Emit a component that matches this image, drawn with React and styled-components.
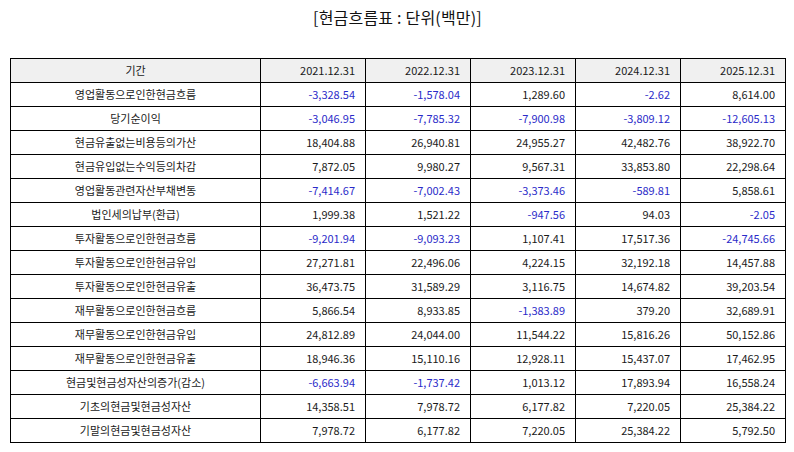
import React from "react";
import styled, { createGlobalStyle, css } from "styled-components";

const Global = createGlobalStyle`
  html, body { margin: 0; padding: 0; background: #fff; }
  body { font-family: "Noto Sans CJK KR", "Noto Sans", sans-serif; color: #111; }
`;

const Page = styled.div`
  width: 794px;
  height: 452px;
  box-sizing: border-box;
  padding: 5px 9px 0 10px;
  display: flex;
  flex-direction: column;
  align-items: stretch;
`;

const Title = styled.h1`
  margin: 0;
  height: 25px;
  font-size: 16px;
  font-weight: 400;
  line-height: 25px;
  text-align: center;
  color: #111;
  letter-spacing: 0.2px;
`;

const Table = styled.table`
  margin-top: 28px;
  width: 775px;
  border-collapse: collapse;
  table-layout: fixed;
  font-size: 11px;
`;

const Col = styled.col`
  width: ${(p) => (p.$wide ? "250px" : "105px")};
`;

const cellBase = css`
  border: 1px solid #000;
  height: 24px;
  padding: 0 10px;
  box-sizing: border-box;
  white-space: nowrap;
  line-height: 1;
  font-weight: 400;
  text-align: ${(p) => (p.$label ? "center" : "right")};
`;

const HeadCell = styled.th`
  ${cellBase}
  background: #f0f0f0;
  color: #1a1a1a;
`;

const Cell = styled.td`
  ${cellBase}
  background: #fff;
  color: ${(p) => (p.$neg ? "#2b2bc9" : "#1a1a1a")};
`;

const headers = ["2021.12.31", "2022.12.31", "2023.12.31", "2024.12.31", "2025.12.31"];

const rows = [
  ["영업활동으로인한현금흐름", "-3,328.54", "-1,578.04", "1,289.60", "-2.62", "8,614.00"],
  ["당기순이익", "-3,046.95", "-7,785.32", "-7,900.98", "-3,809.12", "-12,605.13"],
  ["현금유출없는비용등의가산", "18,404.88", "26,940.81", "24,955.27", "42,482.76", "38,922.70"],
  ["현금유입없는수익등의차감", "7,872.05", "9,980.27", "9,567.31", "33,853.80", "22,298.64"],
  ["영업활동관련자산부채변동", "-7,414.67", "-7,002.43", "-3,373.46", "-589.81", "5,858.61"],
  ["법인세의납부(환급)", "1,999.38", "1,521.22", "-947.56", "94.03", "-2.05"],
  ["투자활동으로인한현금흐름", "-9,201.94", "-9,093.23", "1,107.41", "17,517.36", "-24,745.66"],
  ["투자활동으로인한현금유입", "27,271.81", "22,496.06", "4,224.15", "32,192.18", "14,457.88"],
  ["투자활동으로인한현금유출", "36,473.75", "31,589.29", "3,116.75", "14,674.82", "39,203.54"],
  ["재무활동으로인한현금흐름", "5,866.54", "8,933.85", "-1,383.89", "379.20", "32,689.91"],
  ["재무활동으로인한현금유입", "24,812.89", "24,044.00", "11,544.22", "15,816.26", "50,152.86"],
  ["재무활동으로인한현금유출", "18,946.36", "15,110.16", "12,928.11", "15,437.07", "17,462.95"],
  ["현금및현금성자산의증가(감소)", "-6,663.94", "-1,737.42", "1,013.12", "17,893.94", "16,558.24"],
  ["기초의현금및현금성자산", "14,358.51", "7,978.72", "6,177.82", "7,220.05", "25,384.22"],
  ["기말의현금및현금성자산", "7,978.72", "6,177.82", "7,220.05", "25,384.22", "5,792.50"],
];

export default function App() {
  return (
    <>
      <Global />
      <Page>
        <Title>[현금흐름표 : 단위(백만)]</Title>
        <Table>
          <colgroup>
            <Col $wide />
            {headers.map((h) => (
              <Col key={h} />
            ))}
          </colgroup>
          <thead>
            <tr>
              <HeadCell $label>기간</HeadCell>
              {headers.map((h) => (
                <HeadCell key={h}>{h}</HeadCell>
              ))}
            </tr>
          </thead>
          <tbody>
            {rows.map(([label, ...vals]) => (
              <tr key={label}>
                <Cell $label>{label}</Cell>
                {vals.map((v, i) => (
                  <Cell key={i} $neg={v.startsWith("-")}>{v}</Cell>
                ))}
              </tr>
            ))}
          </tbody>
        </Table>
      </Page>
    </>
  );
}
